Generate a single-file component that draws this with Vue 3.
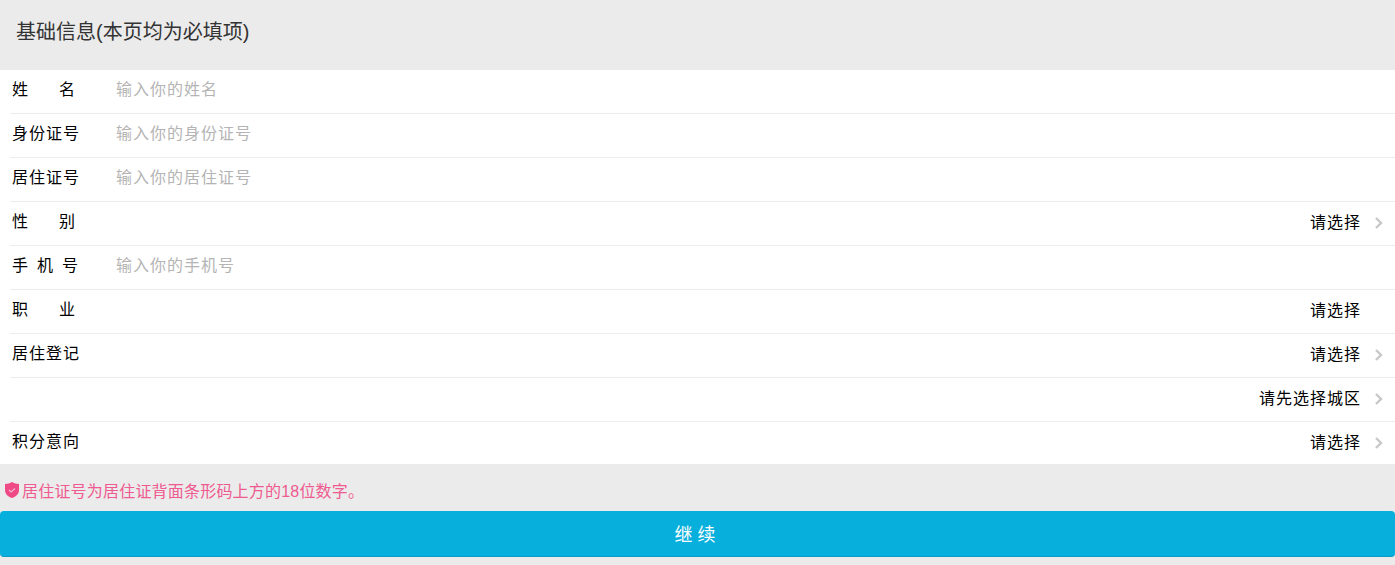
<template>
  <div class="page">
    <h3 class="title">基础信息(本页均为必填项)</h3>
    <ul class="form">
      <li v-for="row in rows" :key="row.label + row.value" class="row">
        <span class="label" :class="row.spread">
          <span v-for="ch in row.label" :key="ch">{{ ch }}</span>
        </span>
        <input v-if="row.placeholder" class="field" type="text" :placeholder="row.placeholder" />
        <template v-else>
          <span class="value">{{ row.value }}</span>
          <svg class="arrow" :class="{ hidden: row.noArrow }" viewBox="0 0 10 14" width="10" height="14">
            <path d="M2 2l5 5-5 5" fill="none" stroke="#c8c8c8" stroke-width="2.400" />
          </svg>
        </template>
      </li>
    </ul>
    <p class="tip">
      <svg class="shield" viewBox="0 0 16 18" width="16" height="18">
        <path d="M8 1c2 1.300 4.300 2 7 2v6c0 4-3 6.700-7 8-4-1.300-7-4-7-8V3c2.700 0 5-.7 7-2z" fill="#ef4a85" />
        <path d="M5 9l2.200 2L11 7.500" fill="none" stroke="#f9b6ce" stroke-width="1.200" />
      </svg>
      居住证号为居住证背面条形码上方的18位数字。
    </p>
    <button class="next" type="button">继 续</button>
  </div>
</template>

<script setup>
const rows = [
  { label: '姓名', spread: 'wide', placeholder: '输入你的姓名' },
  { label: '身份证号', placeholder: '输入你的身份证号' },
  { label: '居住证号', placeholder: '输入你的居住证号' },
  { label: '性别', spread: 'wide', value: '请选择' },
  { label: '手机号', spread: 'mid', placeholder: '输入你的手机号' },
  { label: '职业', spread: 'wide', value: '请选择', noArrow: true },
  { label: '居住登记', value: '请选择' },
  { label: '', value: '请先选择城区' },
  { label: '积分意向', value: '请选择' }
]
</script>

<style>
html,
body {
  margin: 0;
  background: #ebebeb;
}
</style>

<style scoped>
.page {
  height: 565px;
  overflow: hidden;
  font-family: "Liberation Sans", "Noto Sans CJK SC", sans-serif;
  background: #ebebeb;
}
.title {
  margin: 0;
  height: 70px;
  padding: 21px 0 0 16px;
  box-sizing: border-box;
  font-size: 20px;
  line-height: 22px;
  font-weight: normal;
  color: #333;
}
.form {
  margin: 0;
  padding: 0 0 0 10px;
  list-style: none;
  background: #fff;
}
.row {
  display: flex;
  align-items: center;
  height: 44px;
  padding-bottom: 3px;
  box-sizing: border-box;
  border-bottom: 1px solid #ececec;
  font-size: 16px;
  letter-spacing: 1px;
  color: #000;
}
.row:last-child {
  height: 42px;
  padding-bottom: 2px;
  border-bottom: none;
}
.label {
  width: 68px;
  margin: 0 36px 4px 2px;
  flex: none;
  display: flex;
  justify-content: space-between;
}
.label.wide {
  width: 64px;
  margin-right: 40px;
}
.label.mid {
  width: 67px;
  margin-right: 37px;
}
.field {
  flex: 1;
  min-width: 0;
  border: none;
  outline: none;
  padding: 0;
  font: inherit;
  letter-spacing: 1px;
  background: transparent;
}
.field::placeholder {
  color: #b4b4b4;
}
.value {
  margin-left: auto;
  margin-bottom: 2px;
}
.arrow {
  margin: 2px 11px 0 13px;
  flex: none;
}
.arrow.hidden {
  visibility: hidden;
}
.tip {
  display: flex;
  align-items: center;
  margin: 0;
  height: 47px;
  padding: 4px 0 0 4px;
  box-sizing: border-box;
  font-size: 16px;
  letter-spacing: 0.2px;
  color: #ef5a90;
}
.shield {
  margin-right: 2px;
  flex: none;
}
.next {
  display: block;
  width: 100%;
  height: 46px;
  padding: 0 5px 2px 0;
  border: none;
  border-bottom: 1px solid #0a9cc4;
  border-radius: 4px;
  background: #06afdc;
  color: #fff;
  font: inherit;
  font-size: 18px;
}
</style>
